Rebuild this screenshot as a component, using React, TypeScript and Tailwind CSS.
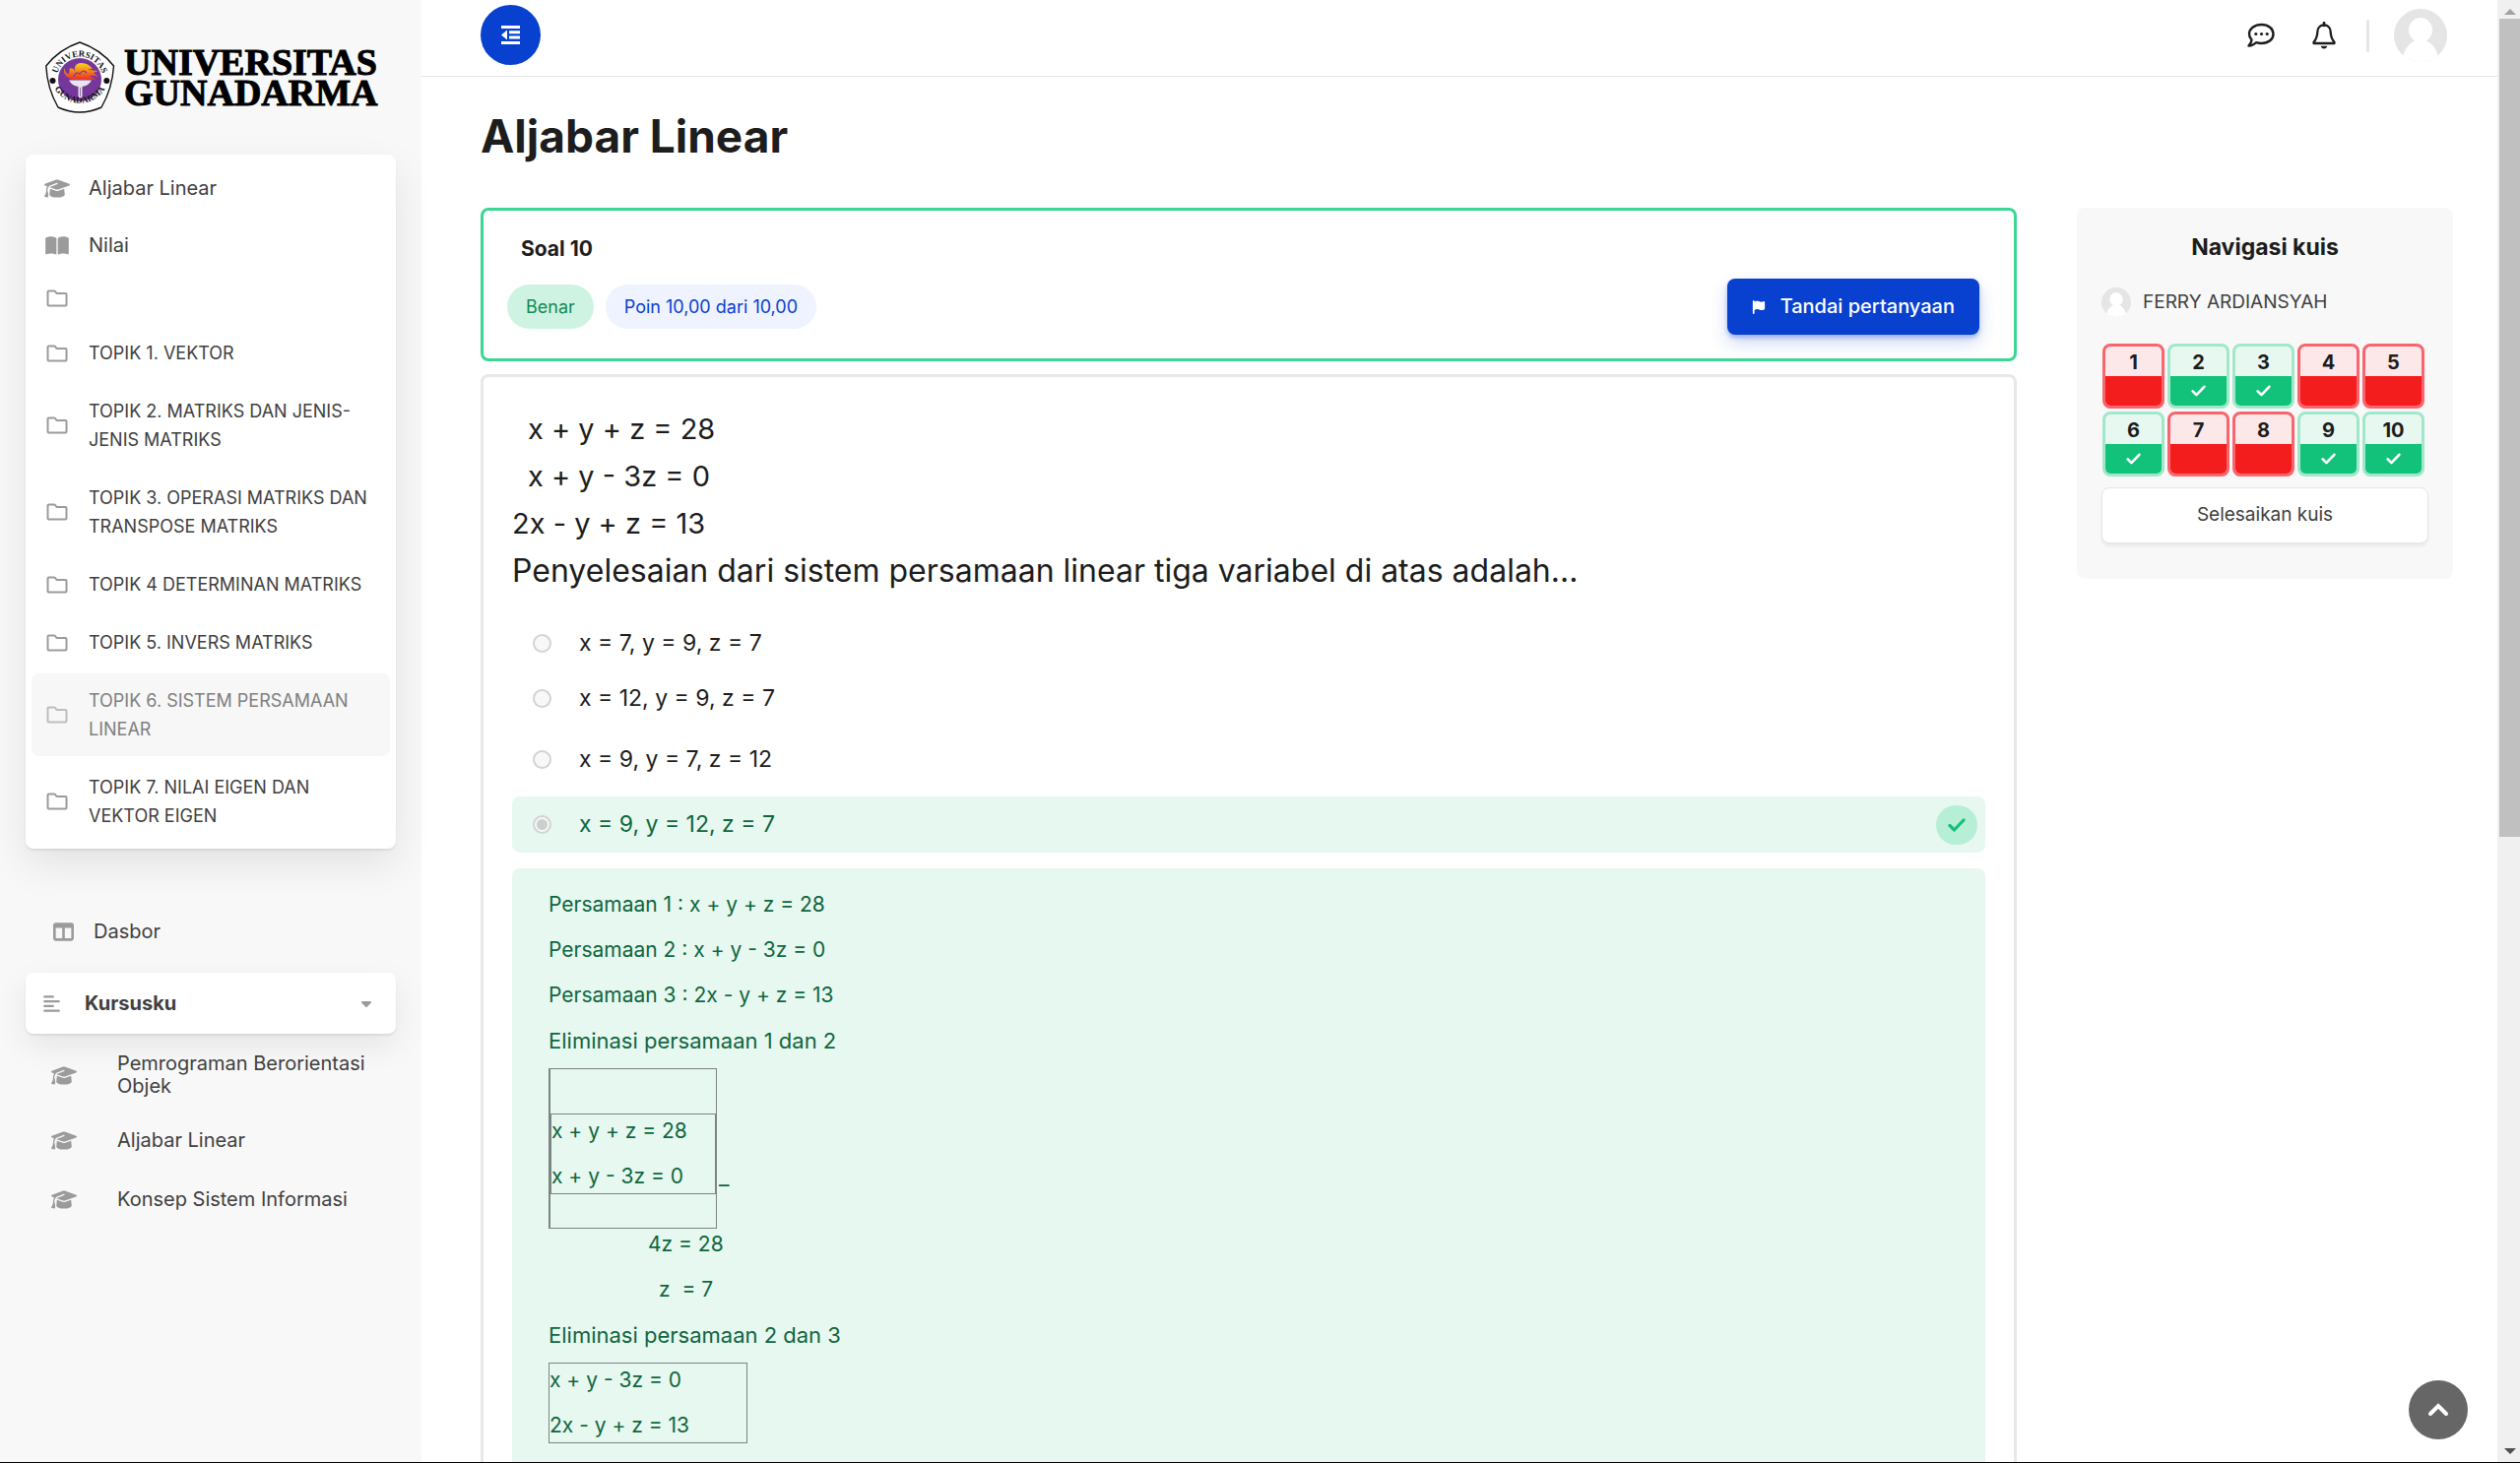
import { useState } from "react";
import {
  FaGraduationCap,
  FaBookOpen,
  FaTableColumns,
  FaAlignLeft,
  FaCaretDown,
  FaFlag,
} from "react-icons/fa6";

const topics = [
  "",
  "TOPIK 1. VEKTOR",
  "TOPIK 2. MATRIKS DAN JENIS-JENIS MATRIKS",
  "TOPIK 3. OPERASI MATRIKS DAN TRANSPOSE MATRIKS",
  "TOPIK 4 DETERMINAN MATRIKS",
  "TOPIK 5. INVERS MATRIKS",
  "TOPIK 6. SISTEM PERSAMAAN LINEAR",
  "TOPIK 7. NILAI EIGEN DAN VEKTOR EIGEN",
];

const courses = ["Pemrograman Berorientasi Objek", "Aljabar Linear", "Konsep Sistem Informasi"];

const options = ["x = 7, y = 9, z = 7", "x = 12, y = 9, z = 7", "x = 9, y = 7, z = 12", "x = 9, y = 12, z = 7"];

const results = [false, true, true, false, false, true, false, false, true, true];

function Emblem() {
  return (
    <svg viewBox="0 0 72 76" className="h-[76px] w-[72px] shrink-0" role="img" aria-label="Lambang Universitas Gunadarma">
      <defs>
        <path id="arcTop" d="M11.5 40 A23.5 23.5 0 0 1 58.5 40" />
        <path id="arcBottom" d="M5.5 38 A29.8 29.8 0 0 0 64.5 38" />
        <linearGradient id="flame" x1="0" y1="0" x2="0" y2="1">
          <stop offset="0.1" stopColor="#fbc916" />
          <stop offset="0.9" stopColor="#ee3a24" />
        </linearGradient>
      </defs>
      <path d="M35 2 Q56 9 69.5 26 Q68 49 57 68 Q35 78 13 68 Q2 49 0.8 26 Q14 9 35 2Z" fill="#fff" stroke="#111" strokeWidth="1.4" strokeLinejoin="round" />
      <circle cx="35" cy="40" r="22" fill="#75389a" />
      <g fontFamily="Liberation Serif, serif" fontWeight="700" fontSize="9" fill="#111">
        <text textAnchor="middle">
          <textPath href="#arcTop" startOffset="50%">UNIVERSITAS</textPath>
        </text>
        <text textAnchor="middle">
          <textPath href="#arcBottom" startOffset="50%">GUNADARMA</textPath>
        </text>
      </g>
      <circle cx="7.5" cy="41" r="3" fill="#111" />
      <circle cx="62.3" cy="41" r="3" fill="#111" />
      <path
        d="M19 28 Q21 34 23 34 Q25 34 24.500 29 Q28 27 30 31 Q29 24 35 23 Q43 22 48 29 L43 29 Q48 31 54 31 L49 33 L54 37 Q48 35 45 36 L52 40 Q45 39 41 40 H29 Q18 38 19 28Z"
        fill="url(#flame)"
      />
      <path d="M29 37 Q31 31 35 34 Q38 29 42 33" fill="none" stroke="#75389a" strokeWidth="1.2" />
      <path d="M24 40.500 H47 Q44 46 37.500 47 V57 Q35.500 60 33.500 57 V47 Q27 46 24 40.500Z" fill="#e8e6ea" />
      <path d="M35.500 48 V57" stroke="#8b7a98" strokeWidth="1" />
    </svg>
  );
}

function Avatar({ className }: { className: string }) {
  return (
    <svg viewBox="0 0 54 54" className={className} role="img" aria-label="Foto profil">
      <defs>
        <clipPath id="round">
          <circle cx="27" cy="27" r="27" />
        </clipPath>
      </defs>
      <g clipPath="url(#round)">
        <rect width="54" height="54" fill="#e5e5e5" />
        <ellipse cx="27" cy="21.500" rx="12" ry="12.500" fill="#fff" />
        <path d="M8 54 Q10 37 22 32 H32 Q44 37 46 54Z" fill="#fff" />
      </g>
    </svg>
  );
}

function FolderIcon() {
  return (
    <svg viewBox="0 0 22 18" className="h-[18px] w-[22px]" fill="none" stroke="currentColor" strokeWidth="2" strokeLinejoin="round" aria-hidden="true">
      <path d="M1.500 2.500 Q1.500 1.500 2.500 1.500 H8 Q9 1.500 9.500 2.500 L10.500 4 H19.500 Q20.500 4 20.500 5 V15.500 Q20.500 16.500 19.500 16.500 H2.500 Q1.500 16.500 1.500 15.500Z" />
    </svg>
  );
}

function ChatIcon() {
  return (
    <svg viewBox="0 0 28 26" className="h-[26px] w-7" aria-hidden="true">
      <path
        d="M14.500 2 C21.500 2 26.500 6 26.500 11.500 C26.500 17 21.500 21 14.500 21 C12.500 21 10.800 20.700 9.200 20.100 C7 22 4.500 23.500 1.500 23.500 C3.200 21.500 4.300 19.500 4.500 17.500 C3 15.800 2 13.800 2 11.500 C2 6 7.500 2 14.500 2Z"
        fill="none"
        stroke="currentColor"
        strokeWidth="2.400"
        strokeLinejoin="round"
      />
      <circle cx="8.800" cy="11.500" r="1.600" fill="currentColor" />
      <circle cx="14.500" cy="11.500" r="1.600" fill="currentColor" />
      <circle cx="20.200" cy="11.500" r="1.600" fill="currentColor" />
    </svg>
  );
}

function BellIcon() {
  return (
    <svg viewBox="0 0 24 28" className="h-7 w-6" aria-hidden="true">
      <path
        d="M12 3.500 C8 3.500 5.300 6.500 5.300 10.500 C5.300 16 3.800 18 1.500 21 V22 H22.500 V21 C20.200 18 18.700 16 18.700 10.500 C18.700 6.500 16 3.500 12 3.500Z"
        fill="none"
        stroke="currentColor"
        strokeWidth="2.300"
        strokeLinejoin="round"
      />
      <path d="M12 1 V4" stroke="currentColor" strokeWidth="2.600" strokeLinecap="round" />
      <path d="M8.500 24.800 H15.500 Q14.500 27.600 12 27.600 Q9.500 27.600 8.500 24.800Z" fill="currentColor" />
    </svg>
  );
}

function OutdentIcon() {
  return (
    <svg viewBox="0 0 19 19" className="size-[19px]" fill="currentColor" aria-hidden="true">
      <path d="M0 0 H19 V3 H0Z M8 5.300 H19 V8.300 H8Z M8 10.600 H19 V13.600 H8Z M0 16 H19 V19 H0Z M6 4.500 V14.500 L0 9.500Z" />
    </svg>
  );
}

function CheckIcon({ className }: { className: string }) {
  return (
    <svg viewBox="0 0 18 14" className={className} fill="none" stroke="currentColor" strokeWidth="3.200" strokeLinecap="round" strokeLinejoin="round" aria-hidden="true">
      <path d="M2 7.500 L6.500 12 L16 2" />
    </svg>
  );
}

function Sidebar() {
  return (
    <aside className="flex w-[428px] shrink-0 flex-col bg-[#f8f8f8] px-[26px] pt-[41px] text-[#404040]">
      <a href="#beranda" className="flex items-center gap-2 pl-5">
        <Emblem />
        <span className="flex flex-col font-['Liberation_Serif',serif] text-[38px] leading-[31px] font-bold text-black [-webkit-text-stroke:1px_black]">
          <span>UNIVERSITAS</span>
          <span>GUNADARMA</span>
        </span>
      </a>

      <nav
        aria-label="Isi kursus"
        className="mt-10 rounded-lg bg-white p-[6px] text-[20px] leading-[29px] shadow-[0_2px_2px_rgba(0,0,0,0.08),0_16px_40px_rgba(0,0,0,0.09)]"
      >
        <a href="#kursus" className="flex h-[57px] items-center">
          <span className="flex w-[52px] justify-center text-[#9b9b9b]">
            <FaGraduationCap className="h-[21px] w-[26px]" />
          </span>
          <span className="pl-[6px]">Aljabar Linear</span>
        </a>
        <a href="#nilai" className="flex h-[58px] items-center">
          <span className="flex w-[52px] justify-center text-[#9b9b9b]">
            <FaBookOpen className="h-[21px] w-6" />
          </span>
          <span className="pl-[6px]">Nilai</span>
        </a>
        <ul className="flex flex-col gap-1 pt-px text-[18px]">
          {topics.map((topic, i) => (
            <li key={i}>
              <a
                href={"#topik-" + i}
                aria-label={topic || "Topik"}
                className={
                  "flex min-h-12 items-center rounded-lg pr-3 " +
                  (topic ? "py-[13px] " : "") +
                  (i === 6 ? "bg-[#f7f7f7] text-[#808080]" : "")
                }
              >
                <span className={"flex w-[52px] shrink-0 justify-center " + (i === 6 ? "text-[#bdbdbd]" : "text-[#9b9b9b]")}>
                  <FolderIcon />
                </span>
                <span className="pl-[6px]">{topic}</span>
              </a>
            </li>
          ))}
        </ul>
      </nav>

      <nav aria-label="Navigasi utama" className="mt-14 text-[20px] leading-[23px]">
        <a href="#dasbor" className="flex h-14 items-center gap-5 pl-7">
          <FaTableColumns className="size-[21px] text-[#9b9b9b]" />
          Dasbor
        </a>
        <button className="mt-[14px] flex h-[62px] w-full items-center rounded-lg bg-white pr-[22px] pl-[17px] text-left font-bold shadow-[0_2px_2px_rgba(0,0,0,0.08),0_12px_32px_rgba(0,0,0,0.08)]">
          <FaAlignLeft className="size-[19px] text-[#9b9b9b]" />
          <span className="flex-1 pl-6">Kursusku</span>
          <FaCaretDown className="size-4 text-[#9b9b9b]" />
        </button>
        <ul className="pt-[6px]">
          {courses.map((c) => (
            <li key={c}>
              <a href="#kursus" className="flex min-h-[60px] items-center py-[13px] pl-[26px]">
                <FaGraduationCap className="h-[21px] w-[26px] shrink-0 text-[#9b9b9b]" />
                <span className="pl-[41px]">{c}</span>
              </a>
            </li>
          ))}
        </ul>
      </nav>
    </aside>
  );
}

function TopBar() {
  return (
    <header className="flex h-[78px] shrink-0 items-start justify-between border-b border-[#e6e6e6] pr-[51px] pl-[60px]">
      <button aria-label="Tutup menu" className="mt-[5px] flex size-[61px] items-center justify-center rounded-full bg-[#0840cf] text-white">
        <OutdentIcon />
      </button>
      <div className="flex items-center pt-[9px]">
        <button aria-label="Pesan" className="text-[#1d1d1d]">
          <ChatIcon />
        </button>
        <button aria-label="Notifikasi" className="ml-[38px] text-[#1d1d1d]">
          <BellIcon />
        </button>
        <span className="ml-[31px] h-[33px] w-[3px] rounded bg-[#e6e6e6]" />
        <button aria-label="Menu pengguna" className="ml-[25px]">
          <Avatar className="size-[54px]" />
        </button>
      </div>
    </header>
  );
}

function QuestionInfo() {
  return (
    <section className="h-[156px] shrink-0 rounded-lg border-[3px] border-[#3bd694] pr-[35px] pl-6">
      <h2 className="pt-6 pl-[14px] text-[21px] leading-[30px] font-bold text-[#1d1d1d]">Soal 10</h2>
      <div className="flex items-center pt-[15px] text-[18px] leading-[45px]">
        <span className="rounded-full bg-[#cff3e3] px-[19px] text-[#128a55]">Benar</span>
        <span className="ml-3 rounded-full bg-[#eff3ff] px-[19px] text-[#0840cf]">Poin 10,00 dari 10,00</span>
        <button className="ml-auto flex h-[57px] items-center rounded-lg bg-[#0840cf] px-[25px] text-[20px] font-medium text-white shadow-[0_3px_4px_rgba(8,64,207,0.3),0_8px_18px_rgba(8,64,207,0.2)]">
          <FaFlag className="mr-[15px] size-[14px]" />
          Tandai pertanyaan
        </button>
      </div>
    </section>
  );
}

function Options() {
  const [picked, setPicked] = useState(3);
  return (
    <fieldset className="mt-[22px] text-[23px]" aria-label="Pilihan jawaban">
      {options.map((o, i) => (
        <label
          key={o}
          className={
            "flex items-center rounded-lg pr-2 pl-[21px] " +
            (i === 3 ? "mt-[5px] h-[57px] bg-[#e7f8f0] text-[#0f6640]" : i === 2 ? "h-[66px]" : i === 1 ? "h-[58px]" : "h-[54px]")
          }
        >
          <input
            type="radio"
            name="jawaban"
            checked={picked === i}
            onChange={() => setPicked(i)}
            className="flex size-[19px] appearance-none items-center justify-center rounded-full border-2 border-[#d2d4d3] bg-[#f8f8f8] checked:before:size-[11px] checked:before:rounded-full checked:before:bg-[#cbcfcd]"
          />
          <span className="flex-1 pl-7">{o}</span>
          {i === 3 && (
            <span className="flex h-10 w-[42px] items-center justify-center rounded-full bg-[#b7eed6] text-[#12c27a]">
              <CheckIcon className="h-[14px] w-[18px]" />
            </span>
          )}
        </label>
      ))}
    </fieldset>
  );
}

function Feedback() {
  return (
    <div className="mt-4 flex-1 rounded-t-lg bg-[#e7f8f0] px-[37px] pt-[14px] text-[21px] leading-[46px] text-[#0f6640]">
      <p>Persamaan 1 : x + y + z = 28</p>
      <p>Persamaan 2 : x + y - 3z = 0</p>
      <p>Persamaan 3 : 2x - y + z = 13</p>
      <p className="text-[22px]">Eliminasi persamaan 1 dan 2</p>
      <div className="mt-[5px] flex items-end">
        <div className="h-[163px] w-[171px] border border-l-2 border-[#7d8481] pt-[45px]">
          <div className="border border-[#7d8481] leading-[34px]">
            <p>x + y + z = 28</p>
            <p className="pt-3">x + y - 3z = 0</p>
          </div>
        </div>
        <span className="pb-[21px] pl-[2px]">–</span>
      </div>
      <p className="-mt-[7px] pl-[101px]">4z = 28</p>
      <p className="pl-[112px] whitespace-pre">z  = 7</p>
      <p className="text-[22px]">Eliminasi persamaan 2 dan 3</p>
      <div className="mt-[5px] w-[202px] border border-[#7d8481] leading-[34px]">
        <p>x + y - 3z = 0</p>
        <p className="pt-3">2x - y + z = 13</p>
      </div>
    </div>
  );
}

function QuizNav() {
  return (
    <aside className="h-[377px] w-[382px] shrink-0 rounded-lg bg-[#f8f8f8] px-[25px] pt-6">
      <h2 className="text-center text-[23px] leading-[32px] font-bold text-[#1d1d1d]">Navigasi kuis</h2>
      <div className="mt-[25px] flex items-center gap-3 text-[19px] leading-[30px] text-[#404040]">
        <Avatar className="size-[30px]" />
        FERRY ARDIANSYAH
      </div>
      <div className="mt-[27px] flex flex-wrap gap-[3px] pl-px">
        {results.map((ok, i) => (
          <a
            key={i}
            href={"#soal-" + (i + 1)}
            className={
              "flex h-[66px] w-[63px] flex-col overflow-hidden rounded-lg border-[3px] text-center text-[20px] font-bold text-[#1d1d1d] " +
              (ok ? "border-[#a0e8c9] bg-[#e7f8f0]" : "border-[#f8656d] bg-[#fde8e9]")
            }
          >
            <span className="h-[30px] leading-[33px]">{i + 1}</span>
            <span className={"flex flex-1 items-center justify-center text-white " + (ok ? "bg-[#12c27a]" : "bg-[#f31d1d]")}>
              {ok && <CheckIcon className="h-3 w-[15px]" />}
            </span>
          </a>
        ))}
      </div>
      <button className="mt-[11px] h-[57px] w-full rounded-lg border border-[#e6e6ee] bg-white text-[19px] text-[#404040] shadow-[0_3px_3px_rgba(0,0,0,0.06)]">
        Selesaikan kuis
      </button>
    </aside>
  );
}

function ScrollBar() {
  return (
    <div aria-hidden="true" className="flex w-[23px] shrink-0 flex-col items-center bg-[#f0f0f0] pl-[2px]">
      <span className="flex h-[19px] items-center pt-1">
        <svg viewBox="0 0 12 6" className="h-[6px] w-3">
          <path d="M0 6 L6 0 L12 6Z" fill="#a3a3a3" />
        </svg>
      </span>
      <span className="h-[831px] w-full bg-[#c0c0c0]" />
      <span className="mt-auto pb-2">
        <svg viewBox="0 0 12 6" className="h-[6px] w-3">
          <path d="M0 0 L6 6 L12 0Z" fill="#505050" />
        </svg>
      </span>
    </div>
  );
}

export default function App() {
  return (
    <div className="flex h-screen overflow-hidden border-b border-black bg-white font-[Inter,sans-serif] text-[#1d1d1d]">
      <Sidebar />
      <div className="flex min-w-0 flex-1 flex-col">
        <TopBar />
        <main className="flex min-h-0 flex-1 flex-col pr-[45px] pl-[60px]">
          <h1 className="pt-7 text-[46px] leading-[64px] font-bold">Aljabar Linear</h1>
          <div className="mt-[41px] flex min-h-0 flex-1 items-start gap-[61px]">
            <div className="flex h-full min-w-0 flex-1 flex-col">
              <QuestionInfo />
              <section className="mt-[13px] flex min-h-0 flex-1 flex-col overflow-hidden rounded-t-lg border-[3px] border-b-0 border-[#e8e8e8] px-[29px] pt-[29px]">
                <div className="text-[29px] leading-[48px]">
                  <p className="pl-4">x + y + z = 28</p>
                  <p className="pl-4">x + y - 3z = 0</p>
                  <p>2x - y + z = 13</p>
                  <p className="text-[32px]">Penyelesaian dari sistem persamaan linear tiga variabel di atas adalah...</p>
                </div>
                <Options />
                <Feedback />
              </section>
            </div>
            <QuizNav />
          </div>
        </main>
      </div>
      <ScrollBar />
      <button aria-label="Kembali ke atas" className="fixed right-[53px] bottom-6 flex size-[60px] items-center justify-center rounded-full bg-[#666] text-white">
        <svg viewBox="0 0 22 14" className="h-[14px] w-[22px]" fill="none" stroke="currentColor" strokeWidth="4" strokeLinecap="round" aria-hidden="true">
          <path d="M3 11 L11 3 L19 11" />
        </svg>
      </button>
    </div>
  );
}
